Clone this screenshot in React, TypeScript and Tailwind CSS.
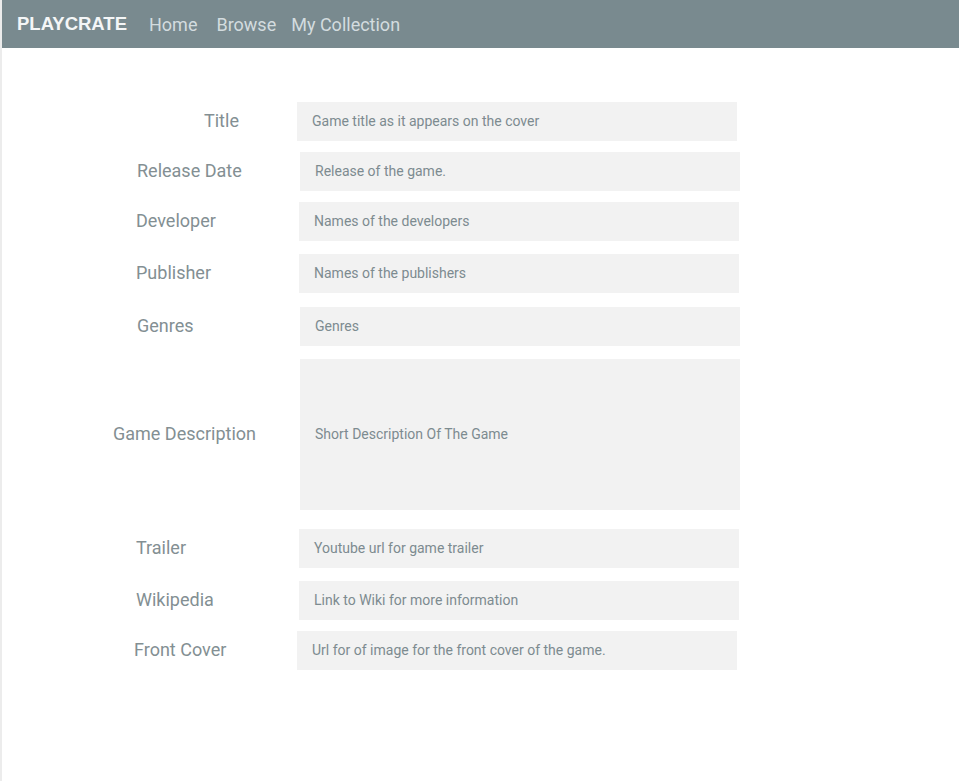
const fields = [
  { label: "Title", hint: "Game title as it appears on the cover", row: "mt-[54px]", lab: "pl-[202px]", box: "ml-0 h-[39px]" },
  { label: "Release Date", hint: "Release of the game.", row: "mt-[11px]", lab: "pl-[135px]", box: "ml-[3px] h-[39px]" },
  { label: "Developer", hint: "Names of the developers", row: "mt-[11px]", lab: "pl-[134px]", box: "ml-[2px] h-[39px]" },
  { label: "Publisher", hint: "Names of the publishers", row: "mt-[13px]", lab: "pl-[134px]", box: "ml-[2px] h-[39px]" },
  { label: "Genres", hint: "Genres", row: "mt-[14px]", lab: "pl-[135px]", box: "ml-[3px] h-[39px]" },
  { label: "Game Description", hint: "Short Description Of The Game", row: "mt-[13px]", lab: "pl-[111px]", box: "ml-[3px] h-[151px]" },
  { label: "Trailer", hint: "Youtube url for game trailer", row: "mt-[19px]", lab: "pl-[134px]", box: "ml-[2px] h-[39px]" },
  { label: "Wikipedia", hint: "Link to Wiki for more information", row: "mt-[13px]", lab: "pl-[134px]", box: "ml-[2px] h-[39px]" },
  { label: "Front Cover", hint: "Url for of image for the front cover of the game.", row: "mt-[11px]", lab: "pl-[132px]", box: "ml-0 h-[39px]" },
];

function NavBar() {
  return (
    <nav className="flex h-[48px] items-center bg-[#798a8f] pl-[15px] text-[18px]">
      <span className="font-['Liberation_Sans',sans-serif] text-[18.5px] font-bold text-[#f4f6f7]">PLAYCRATE</span>
      <a className="ml-[22px] text-[#d3dcdf]">Home</a>
      <a className="ml-[19px] text-[#d3dcdf]">Browse</a>
      <a className="ml-[15px] text-[#d3dcdf]">My Collection</a>
    </nav>
  );
}

export default function App() {
  return (
    <div
      className="min-h-[781px] w-[959px] border-l-2 border-[#ececec] bg-white"
      style={{ fontFamily: "Roboto, 'Liberation Sans', sans-serif" }}
    >
      <NavBar />
      <form className="flex flex-col">
        {fields.map((f) => (
          <div key={f.label} className={`flex items-center ${f.row}`}>
            <label className={`w-[295px] shrink-0 pb-[3px] text-[18px] text-[#838f93] ${f.lab}`}>
              {f.label}
            </label>
            <div className={`flex w-[440px] items-center bg-[#f2f2f2] pl-[15px] text-[14px] text-[#7d8b90] ${f.box}`}>
              {f.hint}
            </div>
          </div>
        ))}
      </form>
    </div>
  );
}
